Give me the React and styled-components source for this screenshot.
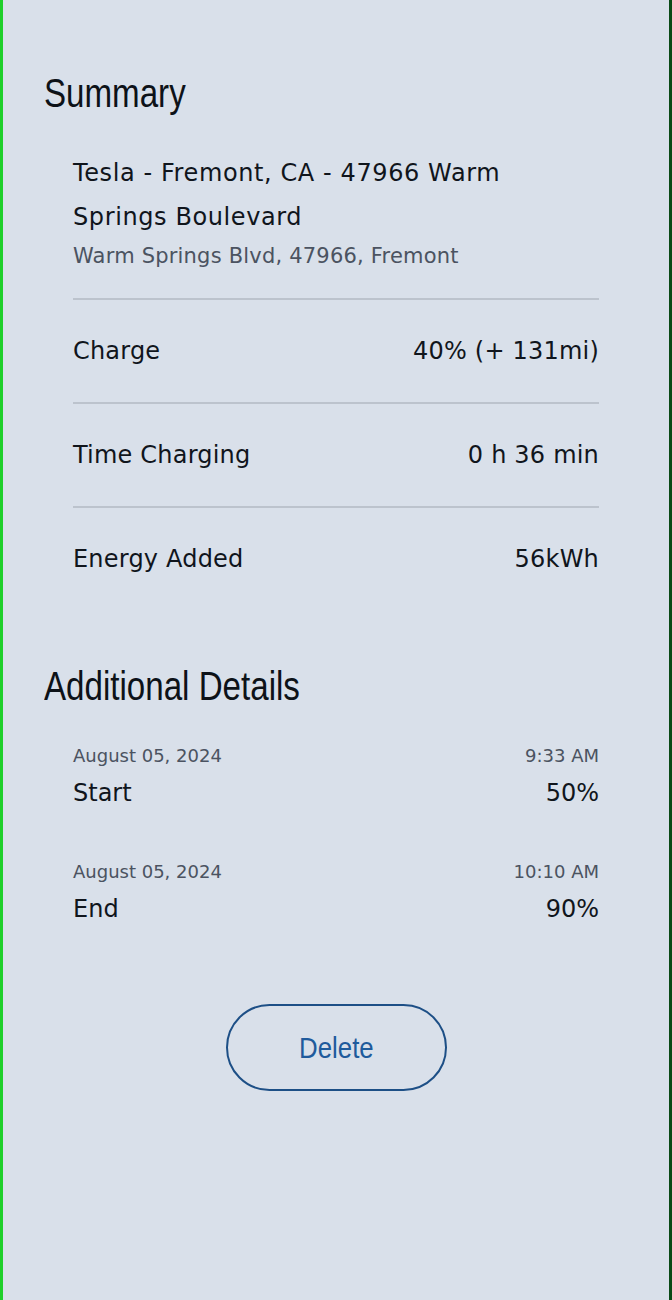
import React from 'react';
import styled, { createGlobalStyle } from 'styled-components';

const GlobalStyle = createGlobalStyle`
  body {
    margin: 0;
    background: #d9e0ea;
    font-family: "DejaVu Sans", "Open Sans", sans-serif;
  }
`;

const Screen = styled.div`
  box-sizing: border-box;
  min-height: 1300px;
  padding-top: 70px;
  background: #d9e0ea;
  border-left: 3px solid #1fd02b;
  border-right: 3px solid #0a4a16;
  color: #10151c;
`;

const Section = styled.section`
  padding: 0 70px 0 41px;
  margin-top: ${(p) => p.$top || 0}px;
`;

// condensed heading face, narrowed from Liberation Sans
const SectionTitle = styled.h2`
  margin: 0;
  font-family: "Liberation Sans", Arial, sans-serif;
  font-weight: 400;
  font-size: 40px;
  line-height: 46px;
  color: #0d1218;
  transform: scaleX(0.828);
  transform-origin: left center;
`;

const SectionBody = styled.div`
  padding-left: 29px;
`;

const LocationName = styled.div`
  margin-top: 35px;
  max-width: 480px;
  font-size: 24px;
  line-height: 44px;
  letter-spacing: 0.6px;
`;

const Address = styled.div`
  margin-top: 3px;
  font-size: 21px;
  line-height: 28px;
  letter-spacing: 0.2px;
  color: #4b5361;
`;

const RowList = styled.div`
  margin-top: 28px;
`;

const DetailRow = styled.div`
  display: flex;
  justify-content: space-between;
  align-items: center;
  height: 102px;
  border-top: 2px solid #bcc3cd;
  font-size: 24px;
  letter-spacing: 0.2px;
`;

const EventList = styled.div`
  margin-top: 35px;
`;

const EventItem = styled.div`
  & + & {
    margin-top: 50px;
  }
`;

const EventLine = styled.div`
  display: flex;
  justify-content: space-between;
  font-size: ${(p) => (p.$small ? 18 : 24)}px;
  line-height: ${(p) => (p.$small ? 24 : 33)}px;
  margin-top: ${(p) => (p.$small ? 0 : 9)}px;
  color: ${(p) => (p.$small ? '#4b5361' : '#10151c')};
`;

const ButtonRow = styled.div`
  display: flex;
  justify-content: center;
  margin-top: 78px;
`;

const DeleteButton = styled.button`
  box-sizing: border-box;
  display: flex;
  align-items: center;
  justify-content: center;
  width: 221px;
  height: 87px;
  border: 2px solid #1d4f86;
  border-radius: 44px;
  background: transparent;
  cursor: pointer;
`;

const ButtonLabel = styled.span`
  display: inline-block;
  font-family: "Liberation Sans", Arial, sans-serif;
  font-size: 30px;
  color: #1f5b9c;
  transform: scaleX(0.86);
`;

const details = [
  { label: 'Charge', value: '40% (+ 131mi)' },
  { label: 'Time Charging', value: '0 h 36 min' },
  { label: 'Energy Added', value: '56kWh' },
];

const events = [
  { date: 'August 05, 2024', time: '9:33 AM', label: 'Start', value: '50%' },
  { date: 'August 05, 2024', time: '10:10 AM', label: 'End', value: '90%' },
];

function App() {
  return (
    <Screen>
      <GlobalStyle />
      <Section>
        <SectionTitle>Summary</SectionTitle>
        <SectionBody>
          <LocationName>Tesla - Fremont, CA - 47966 Warm Springs Boulevard</LocationName>
          <Address>Warm Springs Blvd, 47966, Fremont</Address>
          <RowList>
            {details.map((d) => (
              <DetailRow key={d.label}>
                <span>{d.label}</span>
                <span>{d.value}</span>
              </DetailRow>
            ))}
          </RowList>
        </SectionBody>
      </Section>

      <Section $top={53}>
        <SectionTitle>Additional Details</SectionTitle>
        <SectionBody>
          <EventList>
            {events.map((e) => (
              <EventItem key={e.label}>
                <EventLine $small>
                  <span>{e.date}</span>
                  <span>{e.time}</span>
                </EventLine>
                <EventLine>
                  <span>{e.label}</span>
                  <span>{e.value}</span>
                </EventLine>
              </EventItem>
            ))}
          </EventList>
        </SectionBody>
      </Section>

      <ButtonRow>
        <DeleteButton>
          <ButtonLabel>Delete</ButtonLabel>
        </DeleteButton>
      </ButtonRow>
    </Screen>
  );
}

export default App;
